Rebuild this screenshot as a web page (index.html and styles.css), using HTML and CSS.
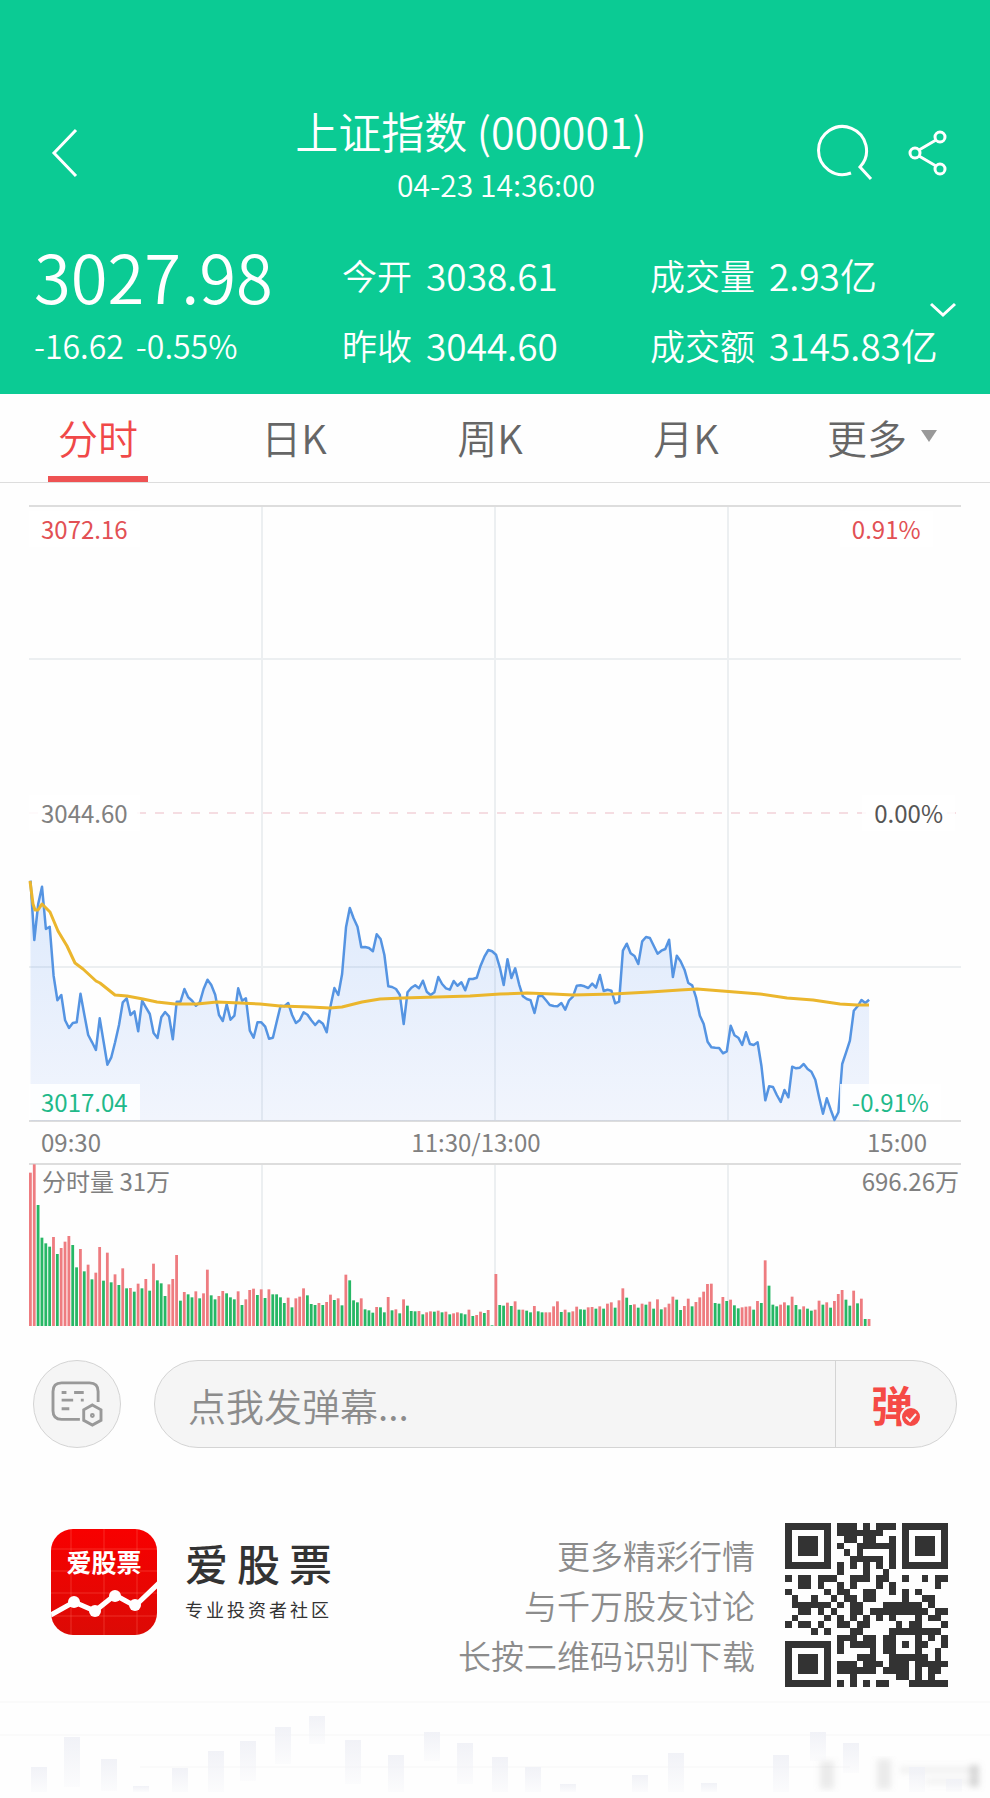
FILE: index.html
```html
<!DOCTYPE html>
<html lang="zh-CN">
<head>
    <meta charset="UTF-8">
    <meta name="viewport" content="width=device-width, initial-scale=1.0">
    <title>上证指数(000001)</title>
    <link rel="stylesheet" href="styles.css">
</head>
<body>
    <header class="header">
        <div class="topbar">
            <button class="icon-btn back" aria-label="返回">
                <svg width="30" height="52" viewBox="0 0 30 52"><path d="M26 3 4 26l22 23"/></svg>
            </button>
            <div class="title">
                <h1>上证指数 (000001)</h1>
                <time>04-23 14:36:00</time>
            </div>
            <div class="actions">
                <button class="icon-btn" aria-label="搜索">
                    <svg width="60" height="60" viewBox="0 0 60 60"><path d="M37 50A24 24 0 1 1 46 44L57 56"/></svg>
                </button>
                <button class="icon-btn" aria-label="分享">
                    <svg class="share" width="40" height="46" viewBox="0 0 40 46"><circle cx="32" cy="7" r="5"/><circle cx="7" cy="23" r="5"/><circle cx="32" cy="39" r="5"/><path d="M11 20 28 10M11 26l17 10"/></svg>
                </button>
            </div>
        </div>
        <div class="stats">
            <div class="price">3027.98</div>
            <div class="stat"><span>今开</span><span class="num">3038.61</span></div>
            <div class="stat"><span>成交量</span><span class="num">2.93亿</span></div>
            <div class="change"><span>-16.62</span><span>-0.55%</span></div>
            <div class="stat"><span>昨收</span><span class="num">3044.60</span></div>
            <div class="stat"><span>成交额</span><span class="num">3145.83亿</span></div>
            <button class="icon-btn expand" aria-label="展开">
                <svg width="30" height="20" viewBox="0 0 30 20"><path d="M3 4l12 11L27 4"/></svg>
            </button>
        </div>
    </header>

    <nav class="tabs">
        <button class="tab active"><span>分时</span></button>
        <button class="tab">日K</button>
        <button class="tab">周K</button>
        <button class="tab">月K</button>
        <button class="tab more">更多<i class="arrow"></i></button>
    </nav>

    <main>
        <section class="chart">
            <div class="plot">
                <svg id="price-chart" viewBox="0 0 932 616">
                    <defs>
                        <linearGradient id="fill" x1="0" y1="0" x2="0" y2="1">
                            <stop offset="0" stop-color="#4a90f0" stop-opacity=".18"/>
                            <stop offset="1" stop-color="#4a80f0" stop-opacity=".07"/>
                        </linearGradient>
                    </defs>
                    <path class="grid" d="M0 154H932M0 462H932M233 0V616M466 0V616M699 0V616"/>
                    <path class="border" d="M0 1H932M0 616H932"/>
                    <path class="middle" d="M0 308H932"/>
                    <polygon id="price-area" fill="url(#fill)"/>
                    <polyline id="price-line" class="price-line"/>
                    <polyline class="avg-line" points="1,376 4,399 6,405 9,405 13,399 16,402 21,407 29,426 38,441 46,458 54,464 67,476 71,478 86,490 98,491 114,494 128,497 146,499 168,499 188,497 211,498 231,499 251,501 281,502 301,503 313,502 333,497 351,494 374,493 441,491 471,489 498,488 524,489 544,490 584,489 621,487 651,485 668,484 731,489 758,493 784,495 811,499 828,500 840,500"/>
                </svg>
                <span class="label top left up">3072.16</span>
                <span class="label top right up">0.91%</span>
                <span class="label mid left">3044.60</span>
                <span class="label mid end">0.00%</span>
                <span class="label bottom left down">3017.04</span>
                <span class="label bottom right down">-0.91%</span>
            </div>
            <div class="times">
                <span>09:30</span>
                <span>11:30/13:00</span>
                <span>15:00</span>
            </div>
            <div class="plot">
                <svg id="volume-chart" viewBox="0 0 932 163">
                    <path class="grid" d="M233 0V163M466 0V163M699 0V163"/>
                    <path class="border" d="M0 1H932"/>
                </svg>
                <div class="volume-labels"><span>分时量 31万</span><span>696.26万</span></div>
            </div>
        </section>

        <form class="comment">
            <button type="button" class="settings" aria-label="弹幕设置">
                <svg width="54" height="48" viewBox="0 0 56 50">
                    <path d="M50 23V12Q50 3 41 3H12Q3 3 3 12v20q0 9 9 9h19"/>
                    <path d="M12 13h5M25 13h10M12 21h12M32 21h3M12 30h8"/>
                    <path d="M44 26l9 5v11l-9 5-9-5V31z"/>
                    <circle cx="44" cy="37" r="1"/>
                </svg>
            </button>
            <div class="comment-box">
                <input type="text" aria-label="发弹幕" placeholder="点我发弹幕...">
                <button type="button" class="toggle" aria-label="弹幕开关">
                    <span>弹</span>
                    <svg width="22" height="22" viewBox="0 0 22 22"><circle cx="11" cy="11" r="10"/><path d="M6 11l4 4 6-7"/></svg>
                </button>
            </div>
        </form>

        <section class="promo">
            <svg class="logo" width="106" height="106" viewBox="0 0 106 106">
                <defs>
                    <linearGradient id="red" x1="0" y1="0" x2="0" y2="1">
                        <stop offset="0" stop-color="#f80000"/>
                        <stop offset="1" stop-color="#dc0a05"/>
                    </linearGradient>
                    <clipPath id="round"><rect width="106" height="106" rx="22"/></clipPath>
                </defs>
                <g clip-path="url(#round)">
                    <rect width="106" height="106" fill="url(#red)"/>
                    <path class="logo-grid" d="M20 0V106M53 0V106M86 0V106M0 20H106M0 42H106M0 64H106M0 87H106"/>
                    <path class="logo-line" d="M-2 87 23 73l21 9 20-16 20 11 24-23"/>
                    <g fill="#fff"><circle cx="23" cy="73" r="6"/><circle cx="44" cy="82" r="6"/><circle cx="64" cy="67" r="6"/><circle cx="84" cy="76" r="6"/></g>
                    <text x="53" y="43" text-anchor="middle">爱股票</text>
                </g>
            </svg>
            <div class="brand">
                <strong>爱股票</strong>
                <span>专业投资者社区</span>
            </div>
            <p class="slogan">更多精彩行情<br>与千万股友讨论<br>长按二维码识别下载</p>
            <svg class="qr" id="qr" width="163" height="164" viewBox="0 0 25 25" preserveAspectRatio="none" role="img" aria-label="二维码"></svg>
        </section>
    </main>

    <footer class="skyline">
        <svg id="skyline" viewBox="0 0 990 101">
            <defs>
                <linearGradient id="fade" x1="0" y1="0" x2="0" y2="1">
                    <stop offset="0" stop-color="#f1f2f7"/>
                    <stop offset="1" stop-color="#f1f2f7" stop-opacity=".2"/>
                </linearGradient>
                <filter id="soft"><feGaussianBlur stdDeviation="3"/></filter>
            </defs>
            <path stroke="#fafafa" stroke-width="2" d="M0 11H990M0 44H990M140 76H850"/>
            <g filter="url(#soft)" fill="#999">
                <path opacity=".2" d="M820 70h14v28h-14zM877 68h14v30h-14z"/>
                <path opacity=".15" d="M900 76h78v6h-78zM925 88h53v5h-53z"/>
                <path opacity=".35" d="M970 74h9v22h-9z"/>
            </g>
        </svg>
    </footer>

    <script>
        const NS = 'http://www.w3.org/2000/svg';
        const STEP = 3.847;

        // 每分钟一个点,单位为 1/3 像素
        const prices = [
            65, 243, 135, 83, 210, 203, 350, 424, 408, 484, 507, 492, 490, 404, 468, 528, 550, 573, 478, 548,
            617, 595, 550, 498, 430, 418, 468, 457, 517, 425, 445, 465, 522, 537, 475, 459, 472, 541, 428, 428,
            390, 415, 425, 440, 430, 390, 362, 378, 407, 468, 486, 436, 482, 470, 388, 425, 418, 515, 536, 490,
            490, 503, 539, 536, 488, 440, 442, 432, 468, 492, 483, 460, 467, 484, 498, 485, 494, 520, 440, 387,
            408, 345, 205, 147, 178, 203, 265, 264, 267, 277, 226, 240, 288, 382, 384, 390, 407, 495, 400, 386,
            379, 388, 365, 398, 408, 400, 354, 375, 388, 392, 366, 380, 370, 394, 360, 360, 356, 320, 293, 273,
            277, 287, 325, 378, 301, 357, 328, 376, 412, 420, 424, 462, 412, 410, 424, 438, 441, 442, 432, 452,
            424, 413, 380, 379, 382, 387, 374, 386, 348, 396, 392, 395, 433, 428, 275, 254, 283, 291, 315, 247,
            234, 237, 260, 284, 275, 270, 242, 354, 290, 307, 332, 372, 379, 415, 470, 495, 548, 565, 566, 567,
            583, 577, 500, 529, 536, 558, 520, 555, 558, 550, 620, 724, 682, 684, 708, 729, 693, 715, 623, 628,
            626, 615, 630, 638, 662, 715, 764, 718, 752, 783, 760, 615, 580, 545, 455, 442, 423, 432, 422
        ];

        // r 红柱,g 绿柱
        const volumes = `
            r130 r105 g227 g325 g342 g352 r323 g374 r356 r337 r320 g347 g414 r359 g426 r406 g450 r430 r353 g454
            r370 g459 r435 g467 r417 g477 r476 g487 r463 g477 r449 g484 r403 g453 g462 g500 r465 r449 r377 g514
            r488 g495 g504 r486 g507 r492 r421 g498 g510 r500 r485 g492 g504 g510 r486 g527 r510 r482 r478 g497
            r480 g506 r480 g495 g495 g504 g521 r505 g534 r507 r502 r477 g498 g524 g527 r521 g527 r518 r496 g512
            r507 g528 r436 g453 g513 g519 r507 g540 g543 g550 r533 g534 g549 r503 g543 r540 g552 r510 g529 g545
            g546 r545 g555 r549 r546 g547 r544 g549 r547 g555 r552 r549 g552 g555 r541 g560 r557 r547 g551 r542
            g588 r434 g527 g529 r520 g530 r516 g541 r541 g544 g549 r530 g546 g549 r549 r549 r531 r516 g548 r541
            g549 r546 r532 g540 g541 r534 r533 g538 r531 g538 r523 r519 g535 r513 r477 g505 g527 r525 g535 r523
            g526 r517 g538 r510 g540 r534 r523 r502 g511 g542 r530 r508 g531 r518 r504 r487 r464 r463 g521 g523
            r503 g515 r511 g528 g537 r534 r532 r531 g541 r515 g521 r393 g469 g526 g531 r526 r519 g528 r502 g527
            g540 r531 g538 g544 r541 r514 g526 r519 g535 r515 r494 r482 g511 g529 r484 g522 r508 g569 r569
        `.trim().split(/\s+/);

        const qrRows = [
            '1111111011101011101111111',
            '1000001011111110001000001',
            '1011101001101100101011101',
            '1011101010011111101011101',
            '1011101001010000101011101',
            '1000001000111110101000001',
            '1111111010101010101111111',
            '0000000010001001000000000',
            '1011011100111011001001011',
            '0011010010100010100000010',
            '1000001011001100101010000',
            '0100100101101100001001100',
            '0111111010110001111110100',
            '0011010100110111111111011',
            '0100001010101010100010110',
            '1011010011011000010110001',
            '0000101000110000111111110',
            '0000000011101101100010101',
            '1111111010111101101011001',
            '1000001010000101100010010',
            '1011101000011100111111010',
            '1011101011101110111011111',
            '1011101011111101111010110',
            '1000001000100000011010100',
            '1111111010101011000111111'
        ];

        const skyline = [
            [31, 76, 25], [64, 46, 50], [101, 68, 32], [133, 95, 6], [172, 77, 24], [208, 60, 41], [240, 50, 40],
            [275, 36, 37], [309, 25, 28], [345, 49, 44], [388, 64, 37], [424, 41, 29], [457, 52, 41], [492, 66, 35],
            [525, 76, 25], [560, 93, 8], [632, 84, 17], [668, 62, 39], [701, 92, 9], [773, 64, 37], [810, 41, 29],
            [843, 52, 30], [909, 76, 25], [946, 88, 13]
        ];

        function addRect(svg, x, y, width, height, fill) {
            const rect = document.createElementNS(NS, 'rect');
            rect.setAttribute('x', x);
            rect.setAttribute('y', y);
            rect.setAttribute('width', width);
            rect.setAttribute('height', height);
            rect.setAttribute('fill', fill);
            svg.appendChild(rect);
        }

        function drawPrice() {
            const points = prices.map((v, i) => `${(1.5 + i * STEP).toFixed(1)},${(354 + v / 3).toFixed(1)}`);
            document.getElementById('price-line').setAttribute('points', points.join(' '));
            document.getElementById('price-area').setAttribute('points', `1.5,616 ${points.join(' ')} 840,616`);
        }

        function drawVolume() {
            const svg = document.getElementById('volume-chart');
            volumes.forEach((item, i) => {
                const height = (590 - item.slice(1)) / 3;
                addRect(svg, i * STEP, 163 - height, 2.8, height, item[0] === 'r' ? '#ee7c80' : '#27b765');
            });
        }

        function drawQr() {
            const svg = document.getElementById('qr');
            qrRows.forEach((row, y) => {
                [...row].forEach((cell, x) => {
                    if (cell === '1') addRect(svg, x, y, 1, 1, '#333');
                });
            });
        }

        drawPrice();
        drawVolume();
        drawQr();
        skyline.forEach(([x, y, h]) => addRect(document.getElementById('skyline'), x, y, 16, h, 'url(#fade)'));
    </script>
</body>
</html>
```
FILE: styles.css
```css
* {
    box-sizing: border-box;
}
body {
    margin: 0;
    background: #fefefe;
    font-family: "Noto Sans CJK SC", sans-serif;
    color: #666;
}
button, input {
    font: inherit;
    color: inherit;
    background: none;
    border: none;
    padding: 0;
}
button {
    cursor: pointer;
}
svg {
    display: block;
    fill: none;
}

/* 顶部 */
.header {
    background: #0bcb94;
    color: #fff;
    padding: 99px 32px 19px 34px;
    font-weight: 350;
}
.topbar {
    display: grid;
    grid-template-columns: 150px 1fr 150px;
    align-items: center;
}
.title {
    text-align: center;
}
.title h1 {
    margin: 0;
    padding-right: 50px;
    font-size: 43px;
    line-height: 62px;
    font-weight: 350;
    white-space: nowrap;
}
.title time {
    display: block;
    font-size: 30px;
    line-height: 46px;
}
.icon-btn svg {
    stroke: #fff;
    stroke-width: 3;
}
.back {
    justify-self: start;
    padding-left: 16px;
}
.actions {
    display: flex;
    align-items: center;
    justify-content: flex-end;
    gap: 34px;
    padding-right: 10px;
}
.stats {
    position: relative;
    display: grid;
    grid-template-columns: 1fr 1fr 1fr;
    grid-template-rows: 80px 60px;
    align-items: center;
    margin-top: 28px;
}
.price {
    font-size: 67px;
    line-height: 80px;
}
.stat {
    display: flex;
    gap: 14px;
    font-size: 35px;
    line-height: 60px;
    white-space: nowrap;
}
.num {
    font-size: 37px;
}
.change {
    display: flex;
    gap: 12px;
    font-size: 32px;
}
.expand {
    position: absolute;
    right: 0;
    top: 65px;
}

/* 周期切换 */
.tabs {
    display: grid;
    grid-template-columns: repeat(5, 1fr);
    height: 89px;
    padding-right: 10px;
    border-bottom: 1px solid #ddd;
}
.tab {
    display: flex;
    justify-content: center;
    font-size: 40px;
    line-height: 86px;
    font-weight: 350;
}
.tab.active {
    color: #f04848;
}
.tab.active span {
    height: 88px;
    padding: 0 10px;
    border-bottom: 6px solid #ee5253;
}
.tab.more {
    gap: 14px;
}
.arrow {
    margin-top: 36px;
    border: 8px solid transparent;
    border-top: 12px solid #999;
    border-bottom: 0;
}

/* 走势图 */
.chart {
    margin: 22px 29px 0;
    font-size: 24px;
    line-height: 36px;
    color: #808080;
}
.plot {
    position: relative;
}
.plot svg {
    width: 100%;
    height: auto;
    overflow: visible;
}
.grid {
    stroke: #eceff1;
    stroke-width: 2;
}
.border {
    stroke: #ddd;
    stroke-width: 2;
}
.middle {
    stroke: #f5dde2;
    stroke-width: 2;
    stroke-dasharray: 9 9;
}
.price-line {
    stroke: #5594e2;
    stroke-width: 2.5;
    stroke-linejoin: round;
}
.avg-line {
    stroke: #ebb62d;
    stroke-width: 3;
    stroke-linejoin: round;
}
.label {
    position: absolute;
    padding: 0 12px;
    background: rgba(255, 255, 255, .85);
}
.top {
    top: 6px;
}
.mid {
    top: 50%;
    transform: translateY(-50%);
}
.bottom {
    bottom: 1px;
}
.left {
    left: 0;
}
.right {
    left: 87%;
}
.end {
    right: 6px;
    color: #555;
}
.up {
    color: #e25054;
}
.down {
    color: #1fb98a;
}
.times {
    display: grid;
    grid-template-columns: 1fr auto 1fr;
    height: 42px;
    padding: 3px 34px 0 12px;
}
.times span:nth-child(2) {
    padding-right: 16px;
}
.times span:last-child {
    text-align: right;
}
.volume-labels {
    position: absolute;
    top: 0;
    left: 0;
    right: 0;
    display: flex;
    justify-content: space-between;
    padding: 0 2px 0 13px;
}

/* 弹幕 */
.comment {
    display: flex;
    gap: 33px;
    margin: 34px 33px 0;
}
.settings {
    display: flex;
    align-items: center;
    justify-content: center;
    width: 88px;
    height: 88px;
    border: 1px solid #d4d4d4;
    border-radius: 50%;
    background: #f5f5f5;
}
.settings svg {
    stroke: #999;
    stroke-width: 3;
}
.comment-box {
    flex: 1;
    display: flex;
    height: 88px;
    border: 1px solid #d4d4d4;
    border-radius: 44px;
    background: #f5f5f5;
}
.comment-box input {
    flex: 1;
    min-width: 0;
    padding-left: 33px;
    font-size: 38px;
    font-weight: 350;
    outline: none;
}
.comment-box input::placeholder {
    color: #8c8c8c;
    opacity: 1;
}
.toggle {
    position: relative;
    width: 121px;
    padding-right: 8px;
    border-left: 1px solid #d4d4d4;
    color: #f54a45;
    font-size: 42px;
    font-weight: 700;
    line-height: 80px;
}
.toggle svg {
    position: absolute;
    left: 64px;
    top: 45px;
    fill: #f54a45;
    stroke: #f5f5f5;
    stroke-width: 2;
}

/* 下载引导 */
.promo {
    display: flex;
    align-items: flex-start;
    margin: 75px 42px 0 51px;
}
.logo {
    margin-top: 6px;
}
.logo text {
    fill: #fff;
    font-size: 25px;
    font-weight: 700;
}
.logo-grid {
    stroke: #ff6a5a;
    stroke-opacity: .4;
}
.logo-line {
    stroke: #fff;
    stroke-width: 5;
}
.brand {
    display: flex;
    flex-direction: column;
    gap: 3px;
    margin: 10px 0 0 28px;
    color: #333;
}
.brand strong {
    font-size: 43px;
    line-height: 58px;
    font-weight: 500;
    letter-spacing: 9px;
}
.brand span {
    font-size: 18px;
    line-height: 30px;
    letter-spacing: 3px;
}
.slogan {
    flex: 1;
    margin: 7px 30px 0 0;
    text-align: right;
    font-size: 33px;
    line-height: 50px;
    font-weight: 350;
    color: #8c8c8c;
}
.qr {
    shape-rendering: crispEdges;
}

.skyline {
    margin-top: 4px;
}
.skyline svg {
    width: 100%;
    height: auto;
}
```
